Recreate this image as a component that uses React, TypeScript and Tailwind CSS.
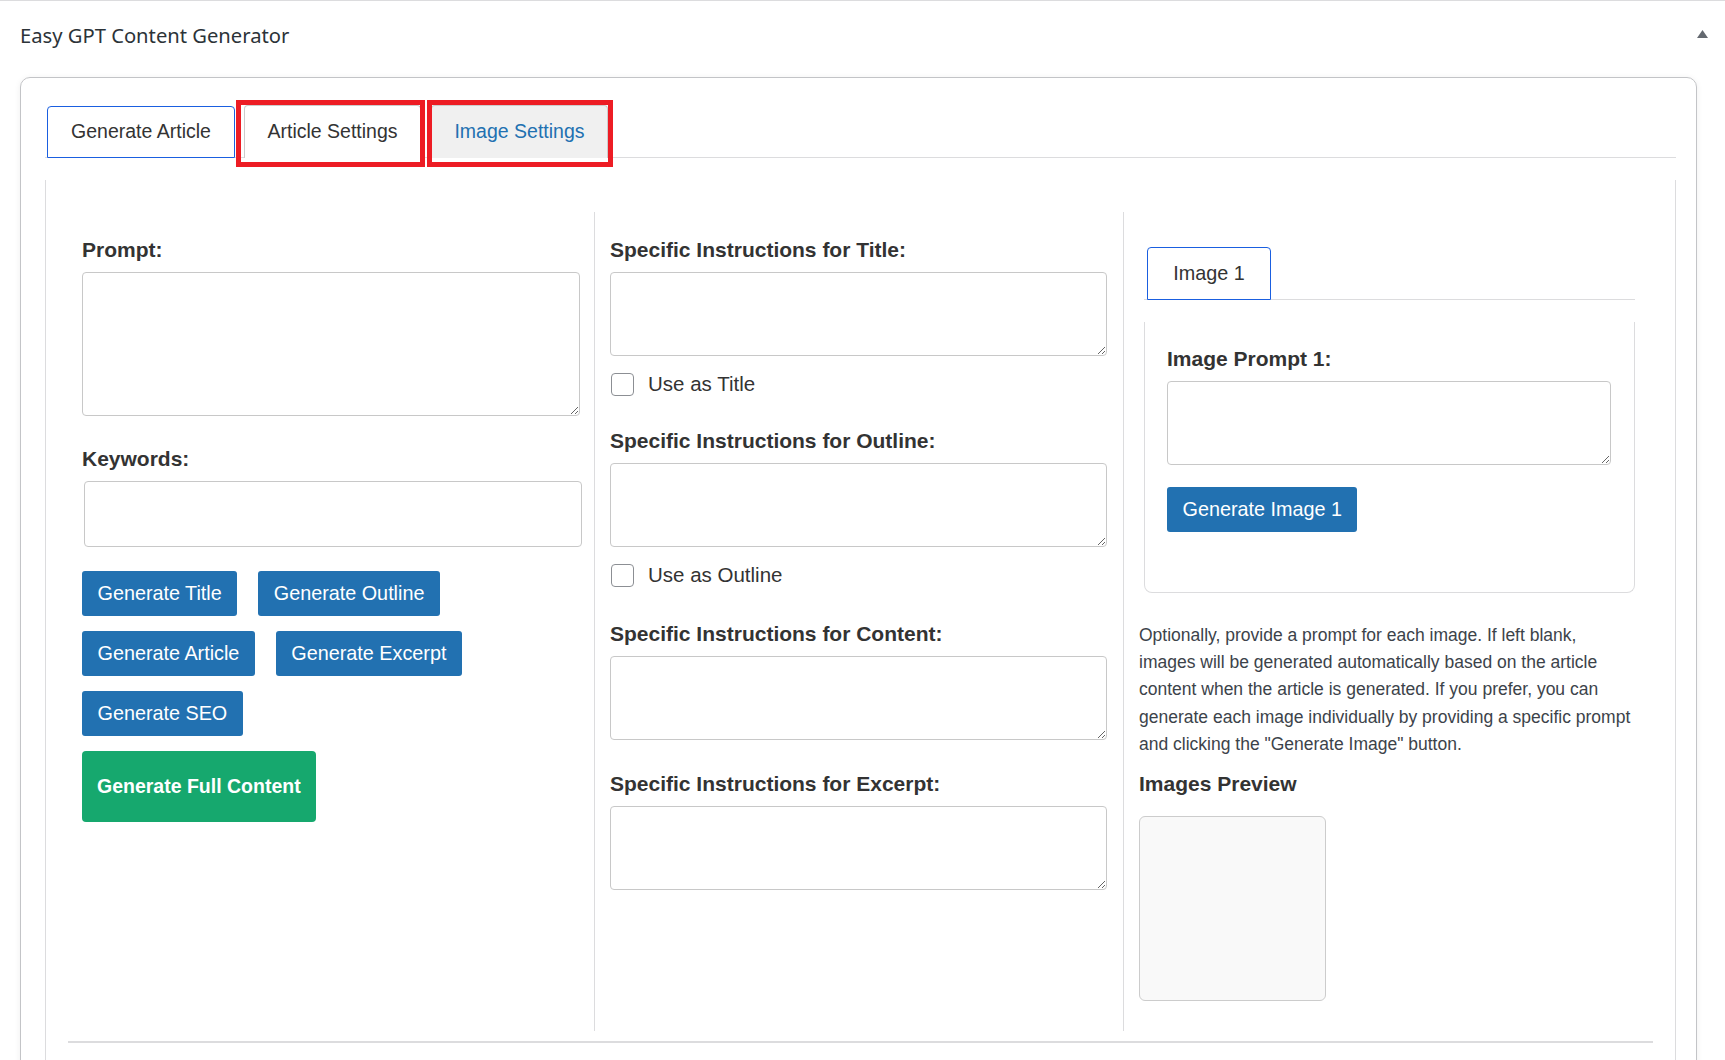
import React from 'react';

const labelCls = 'block text-[21px] leading-[24px] font-bold text-[#333]';
const areaCls = 'block w-full rounded-[4px] border border-[#c8c8c8] bg-white';
const btnCls =
  'h-[45px] px-[15.5px] rounded-[3px] bg-[#2271b1] text-white text-[19.8px] leading-none flex items-center whitespace-nowrap';

const Field = ({ label, checkbox, className = '' }: { label: string; checkbox?: string; className?: string }) => (
  <div className={className}>
    <label className={labelCls}>{label}</label>
    <textarea className={`${areaCls} mt-[10px] h-[84px]`} />
    {checkbox && (
      <div className="mt-[17px] flex items-center h-[23px]">
        <input
          type="checkbox"
          className="appearance-none ml-[1px] w-[23px] h-[23px] rounded-[4px] border border-[#8c8f94] bg-white"
        />
        <span className="ml-[14px] text-[20.5px] text-[#333]">{checkbox}</span>
      </div>
    )}
  </div>
);

export default function App() {
  return (
    <div
      className="h-[1060px] overflow-hidden bg-white border-t border-[#dcdcde]"
      style={{ fontFamily: '"Liberation Sans", Arial, sans-serif' }}
    >
      {/* postbox header */}
      <div className="h-[69px] flex items-center justify-between pl-[20px] pr-[17px]">
        <h2
          className="text-[20.2px] text-[#2c3338] font-normal"
          style={{ fontFamily: '"Noto Sans", sans-serif' }}
        >
          Easy GPT Content Generator
        </h2>
        <svg width="11" height="8" viewBox="0 0 11 8" className="mb-[3px]">
          <polygon points="5.5,0 11,8 0,8" fill="#646970" />
        </svg>
      </div>

      <div className="ml-[20px] mr-[28px] mt-[7px] rounded-[10px] border border-[#c3c4c7] shadow-[0_1px_6px_rgba(0,0,0,0.07)] pt-[26px] pl-[24px] pr-[20px] pb-[60px]">
        {/* main tabs */}
        <div className="flex items-end border-b border-[#dcdcde] h-[54px]">
          <button className="ml-[2px] -mb-px w-[188px] h-[52px] rounded-t-[4px] border-[1.5px] border-[#1a5fe0] bg-white text-[19.5px] text-[#333]">
            Generate Article
          </button>
          <div className="relative ml-[9px] -mb-px">
            <button className="w-[177px] h-[53px] rounded-t-[4px] border border-b-0 border-[#ccc] bg-white text-[19.5px] text-[#333]">
              Article Settings
            </button>
            <div className="absolute -left-[8px] -right-[4px] -top-[5px] -bottom-[9px] border-[5px] border-[#ed1c24] pointer-events-none" />
          </div>
          <div className="relative ml-[10px] -mb-px">
            <button className="w-[177px] h-[53px] rounded-t-[4px] border border-b-0 border-[#ccc] bg-[#f0f0f0] text-[19.5px] text-[#2271b1]">
              Image Settings
            </button>
            <div className="absolute -left-[4px] -right-[5px] -top-[5px] -bottom-[9px] border-[5px] border-[#ed1c24] pointer-events-none" />
          </div>
        </div>

        {/* tab panel */}
        <div className="mt-[22px] border-l border-r border-[#dcdcde] px-[19px] pt-[32px]">
          <div className="grid grid-cols-[529px_529px_1fr]">
            {/* column 1 */}
            <div className="h-[819px] pt-[26px] pl-[17px] pr-[14px]">
              <label className={labelCls}>Prompt:</label>
              <textarea className={`${areaCls} mt-[10px] h-[144px]`} />
              <label className={`${labelCls} mt-[31px]`}>Keywords:</label>
              <input type="text" className={`${areaCls} mt-[10px] h-[66px] ml-[2px] w-[497px]`} />
              <div className="mt-[24px] flex flex-col gap-[15px]">
                <div className="flex gap-[21px]">
                  <button className={btnCls}>Generate Title</button>
                  <button className={btnCls}>Generate Outline</button>
                </div>
                <div className="flex gap-[21px]">
                  <button className={btnCls}>Generate Article</button>
                  <button className={btnCls}>Generate Excerpt</button>
                </div>
                <div className="flex">
                  <button className={btnCls}>Generate SEO</button>
                </div>
                <div className="flex">
                  <button className="h-[71px] px-[15px] rounded-[4px] bg-[#16a86e] text-white text-[19.5px] font-bold whitespace-nowrap">
                    Generate Full Content
                  </button>
                </div>
              </div>
            </div>

            {/* column 2 */}
            <div className="h-[819px] border-l border-[#dcdcde] pt-[26px] pl-[15px] pr-[16px]">
              <Field label="Specific Instructions for Title:" checkbox="Use as Title" />
              <Field label="Specific Instructions for Outline:" checkbox="Use as Outline" className="mt-[33px]" />
              <Field label="Specific Instructions for Content:" className="mt-[35px]" />
              <Field label="Specific Instructions for Excerpt:" className="mt-[32px]" />
            </div>

            {/* column 3 */}
            <div className="h-[819px] border-l border-[#dcdcde] pt-[26px] pl-[15px] pr-[20px]">
              <div className="ml-[5px] mr-[1px]">
                <div className="mt-[8px] flex items-end border-b border-[#dcdcde] h-[54px]">
                  <button className="ml-[3px] -mb-px w-[124px] h-[53px] rounded-t-[4px] border-[1.5px] border-[#1a5fe0] bg-white text-[19.8px] text-[#333]">
                    Image 1
                  </button>
                </div>
                <div className="mt-[22px] border-l border-r border-b border-[#dcdcde] rounded-b-[8px] pt-[25px] pl-[22px] pr-[23px] pb-[60px]">
                  <label className={labelCls}>Image Prompt 1:</label>
                  <textarea className={`${areaCls} mt-[10px] h-[84px]`} />
                  <div className="mt-[22px] flex">
                    <button className={`${btnCls} h-[44px]`}>Generate Image 1</button>
                  </div>
                </div>
              </div>
              <p className="mt-[29px] w-[494px] text-[17.5px] leading-[27.2px] text-[#3c434a]">
                Optionally, provide a prompt for each image. If left blank, images will be generated
                automatically based on the article content when the article is generated. If you
                prefer, you can generate each image individually by providing a specific prompt and
                clicking the "Generate Image" button.
              </p>
              <h3 className={`${labelCls} mt-[14px]`}>Images Preview</h3>
              <div className="mt-[20px] w-[187px] h-[185px] rounded-[6px] border border-[#ccc] bg-[#f9f9f9]" />
            </div>
          </div>
          <div className="mt-[10px] mx-[3px] border-t-2 border-[#dcdcde]" />
          <div className="h-[40px]" />
        </div>
      </div>
    </div>
  );
}
